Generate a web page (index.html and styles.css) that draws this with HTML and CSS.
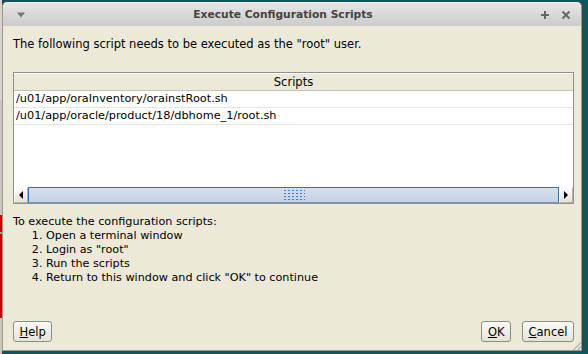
FILE: index.html
```html
<!DOCTYPE html>
<html lang="en">
<head>
  <meta charset="utf-8">
  <title>Execute Configuration Scripts</title>
  <link rel="stylesheet" href="styles.css">
</head>
<body>
  <div class="desk">
    <div class="desk-left"></div>
    <div class="window">
      <div class="titlebar">
        <svg class="menu-btn" width="10" height="6" viewBox="0 0 10 6"><path d="M1 0.5 L9 0.5 L5 5.5 Z" fill="#777"/></svg>
        <div class="title">Execute Configuration Scripts</div>
        <div class="controls">
          <svg width="10" height="10" viewBox="0 0 10 10"><path d="M5 1v8M1 5h8" stroke="#666" stroke-width="2"/></svg>
          <svg width="10" height="10" viewBox="0 0 10 10"><path d="M1.5 1.5l7 7M8.5 1.5l-7 7" stroke="#666" stroke-width="2"/></svg>
        </div>
      </div>
      <div class="content">
        <p class="intro">The following script needs to be executed as the "root" user.</p>
        <div class="table">
          <div class="thead">Scripts</div>
          <div class="rows">
            <div class="row">/u01/app/oraInventory/orainstRoot.sh</div>
            <div class="row">/u01/app/oracle/product/18/dbhome_1/root.sh</div>
          </div>
          <div class="hscroll">
            <div class="arrow"><svg width="4" height="8" viewBox="0 0 4 8"><path d="M4 0 L0 4 L4 8 Z" fill="#000"/></svg></div>
            <div class="track">
              <div class="grip"></div>
            </div>
            <div class="arrow"><svg width="4" height="8" viewBox="0 0 4 8"><path d="M0 0 L4 4 L0 8 Z" fill="#000"/></svg></div>
          </div>
        </div>
        <div class="steps">
          <div>To execute the configuration scripts:</div>
          <ol>
            <li>Open a terminal window</li>
            <li>Login as "root"</li>
            <li>Run the scripts</li>
            <li>Return to this window and click "OK" to continue</li>
          </ol>
        </div>
        <div class="buttons">
          <button><u>H</u>elp</button>
          <div class="right">
            <button><u>O</u>K</button>
            <button><u>C</u>ancel</button>
          </div>
        </div>
      </div>
      <div class="grip-corner"></div>
    </div>
  </div>
</body>
</html>
```

FILE: styles.css
```css
* {
  box-sizing: border-box;
}

html, body {
  margin: 0;
  padding: 0;
  width: 588px;
  height: 354px;
  overflow: hidden;
  font-family: "DejaVu Sans", sans-serif;
  font-size: 11.5px;
  color: #000;
}

.desk {
  display: flex;
  width: 588px;
  height: 354px;
  background: #11545a;
}

.desk-left {
  width: 2px;
  background: linear-gradient(#d8d5cc 0 100px, #c9c6bc 100px 215px, #c00 215px 232px, #999 232px 234px, #c00 234px 318px, #c9c6bc 318px);
}

.window {
  width: 580px;
  height: 349px;
  margin-top: 2px;
  background: #ece9d8;
  border: 1px solid #9a988f;
  border-top: none;
  border-radius: 5px 5px 0 0;
  display: flex;
  flex-direction: column;
  position: relative;
}

.titlebar {
  height: 24px;
  display: flex;
  align-items: center;
  padding: 0 10px 0 13px;
  background: linear-gradient(#e6e6e6, #cbcbcb);
  border-radius: 5px 5px 0 0;
  border-top: 1px solid #f4f4f4;
}

.title {
  flex: 1;
  text-align: center;
  font-weight: bold;
  font-size: 10.7px;
  color: #444;
}

.controls {
  display: flex;
  gap: 11px;
}

.content {
  flex: 1;
  display: flex;
  flex-direction: column;
  padding: 0 7px 8px 10px;
}

.intro {
  margin: 11px 0 0 0;
  line-height: 14px;
}

.table {
  margin-top: 21px;
  border: 1px solid #8f8f8f;
  background: #fff;
  height: 132px;
  display: flex;
  flex-direction: column;
}

.thead {
  height: 18px;
  line-height: 17px;
  text-align: center;
  background: #ece9d8;
  border-bottom: 1px solid #c4c2b8;
  border-top: 1px solid #fff;
}

.rows {
  flex: 1;
  font-size: 11.3px;
}

.row {
  height: 17px;
  line-height: 16px;
  padding-left: 2px;
  border-bottom: 1px solid #e4e4e4;
}

.hscroll {
  height: 16px;
  display: flex;
  background: #ece9d8;
}

.arrow {
  width: 14px;
  display: flex;
  align-items: center;
  justify-content: center;
  background: linear-gradient(#fdfdfb, #e4e2d8);
  border: 1px solid #fff;
  border-right-color: #b4b2a8;
  border-bottom-color: #b4b2a8;
}

.track {
  flex: 1;
  display: flex;
  align-items: center;
  justify-content: center;
  background: linear-gradient(#d6e0ee, #c2d2e6);
  border: 1px solid #3b6cb4;
  border-bottom-color: #7d93b6;
}

.grip {
  width: 22px;
  height: 12px;
  background-image: radial-gradient(circle, #4a78c8 0.9px, transparent 1.1px);
  background-size: 4px 3px;
}

.steps {
  margin-top: 11px;
  line-height: 14px;
  font-size: 11.2px;
}

.steps ol {
  margin: 0;
  padding-left: 33px;
}

.buttons {
  margin-top: auto;
  display: flex;
  justify-content: space-between;
  align-items: flex-end;
}

.right {
  display: flex;
  gap: 11px;
}

button {
  font-family: "DejaVu Sans", sans-serif;
  font-size: 11.5px;
  height: 21px;
  padding: 0 5.5px;
  background: linear-gradient(#fafaf6, #e6e3d8);
  border: 1px solid #8e8d86;
  border-radius: 3px;
  color: #000;
}

.grip-corner {
  position: absolute;
  right: 0;
  bottom: 0;
  width: 8px;
  height: 8px;
  background: linear-gradient(135deg, transparent 50%, #bbb 50%, #bbb 60%, transparent 60%, transparent 75%, #bbb 75%, #bbb 85%, transparent 85%);
}
```
